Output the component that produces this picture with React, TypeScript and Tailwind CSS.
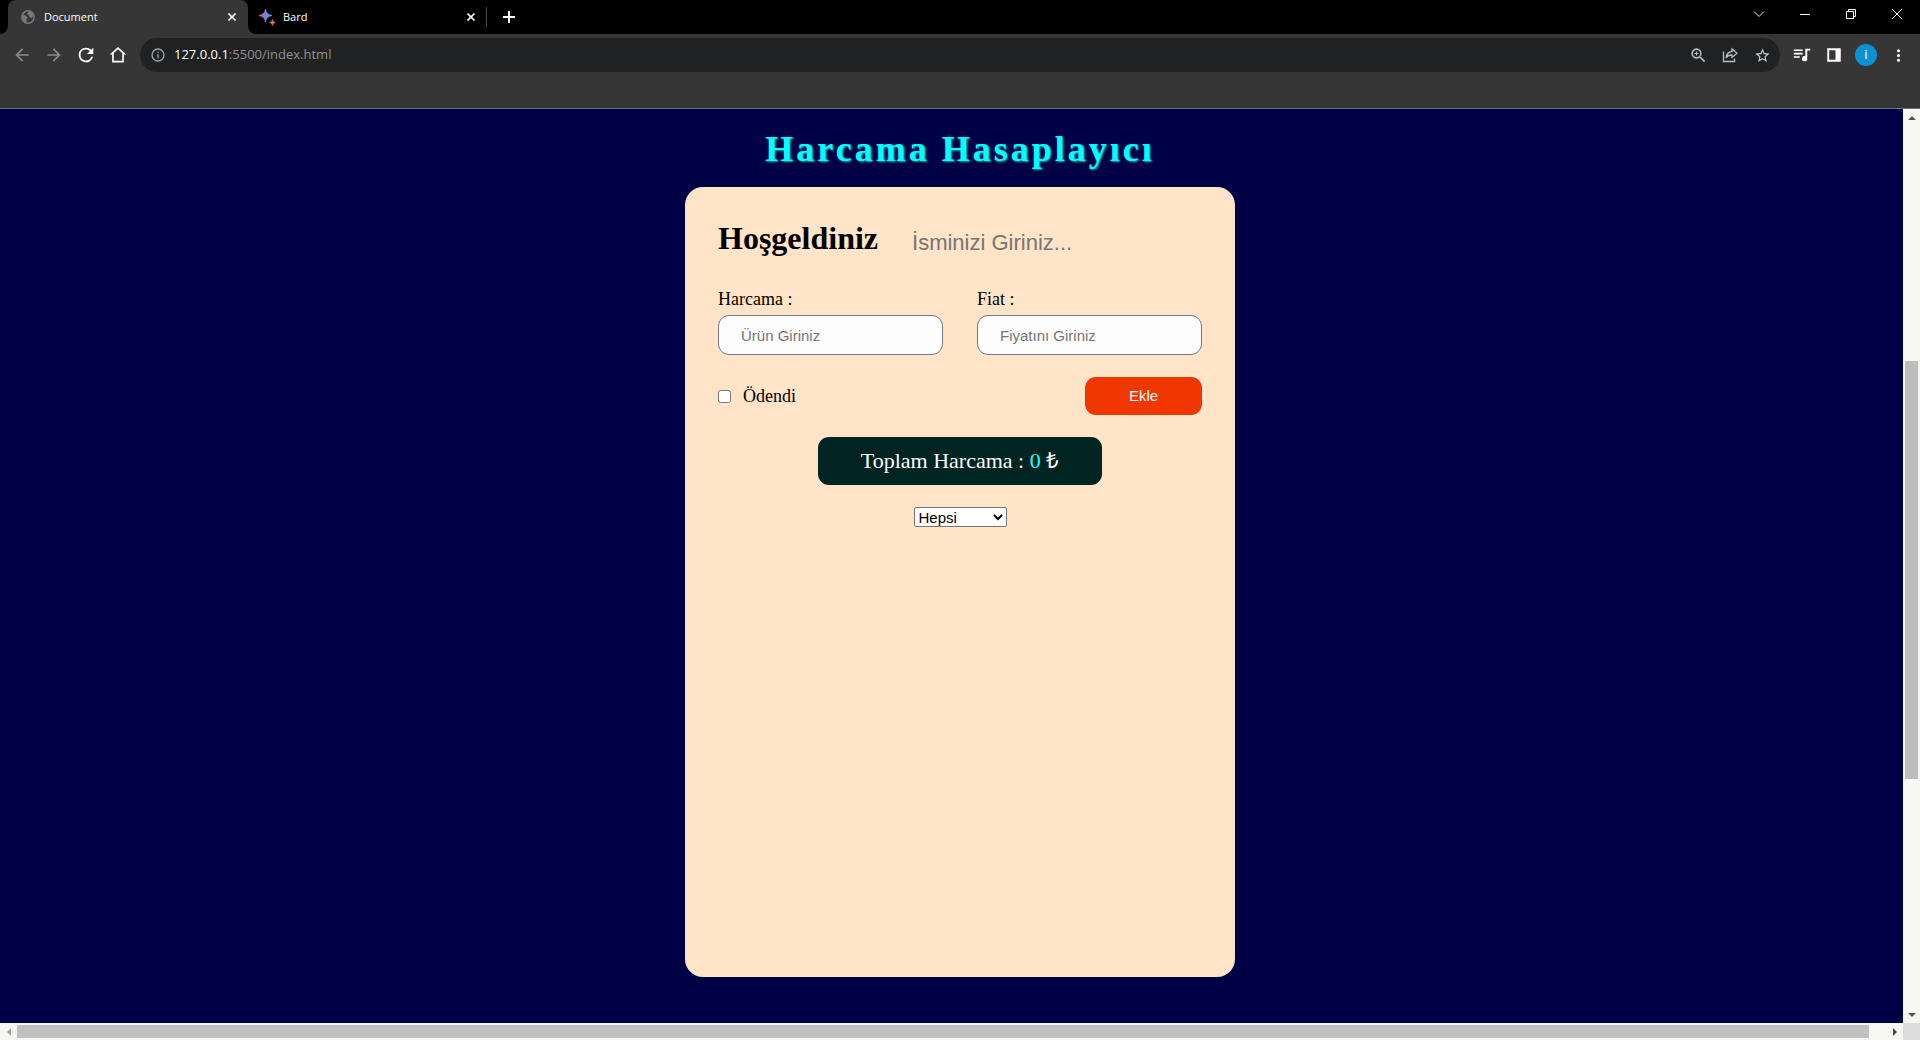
import React from "react";

const uiFont = "font-['Open_Sans','Noto_Sans',sans-serif]";
const serif = "font-['Liberation_Serif','Times_New_Roman',serif]";
const sans = "font-['Liberation_Sans',Arial,sans-serif]";

type IconProps = { path: string; className?: string };

function Icon({ path, className = "size-5" }: IconProps) {
  return (
    <svg viewBox="0 0 24 24" fill="currentColor" className={className} aria-hidden="true">
      <path d={path} />
    </svg>
  );
}

const paths = {
  back: "M20 11H7.83l5.59-5.59L12 4l-8 8 8 8 1.41-1.41L7.83 13H20v-2z",
  forward: "M12 4l-1.41 1.41L16.17 11H4v2h12.17l-5.58 5.59L12 20l8-8z",
  reload:
    "M17.65 6.35A7.96 7.96 0 0 0 12 4a8 8 0 1 0 7.73 10h-2.08A6 6 0 1 1 12 6c1.66 0 3.14.69 4.22 1.78L13 11h7V4l-2.35 2.35z",
  home: "M12 1.2L1 11.2h3.2V22h15.6V11.2H23L12 1.2zM6.4 19.8V9.3L12 4.2l5.600 5.100v10.500z",
  info: "M11 7h2v2h-2zm0 4h2v6h-2zm1-9a10 10 0 1 0 0 20 10 10 0 0 0 0-20zm0 18a8 8 0 1 1 0-16 8 8 0 0 1 0 16z",
  zoom: "M15.5 14h-.79l-.28-.27A6.500 6.500 0 1 0 13.730 14.430l.27.28v.79l5 4.990L20.490 19l-4.990-5zm-6 0a4.500 4.500 0 1 1 0-9 4.500 4.500 0 0 1 0 9zM10.200 7H8.800v1.800H7v1.400h1.800V12h1.400v-1.800H12V8.800h-1.800z",
  star: "M22 9.24l-7.190-.62L12 2 9.190 8.630 2 9.240l5.460 4.730L5.820 21 12 17.270 18.180 21l-1.630-7.030L22 9.240zM12 15.400l-3.760 2.270 1-4.280-3.320-2.880 4.380-.38L12 6.100l1.710 4.040 4.380.38-3.320 2.880 1 4.280L12 15.400z",
  queue:
    "M1 4.500h12v2.200H1zM1 9h12v2.200H1zM1 13.500h8v2.200H1zM15.500 3.500H23v2.400h-4v11a3.500 3.500 0 1 1-2.600-3.300V3.500z",
  panel: "M3 3h18v18H3zm2.600 2.600v12.800H14V5.600z",
  dots: "M12 8a2 2 0 1 0 0-4 2 2 0 0 0 0 4zm0 2a2 2 0 1 0 0 4 2 2 0 0 0 0-4zm0 6a2 2 0 1 0 0 4 2 2 0 0 0 0-4z",
};

function ToolButton({ label, path, tone = "text-white", size = "size-5" }: { label: string; path: string; tone?: string; size?: string }) {
  return (
    <button aria-label={label} className={`flex size-8 items-center justify-center ${tone}`}>
      <Icon path={path} className={size} />
    </button>
  );
}

function CloseIcon() {
  return (
    <svg viewBox="0 0 8 8" className="size-2" stroke="white" strokeWidth="1.6" aria-hidden="true">
      <path d="M.5.5l7 7M7.500.5l-7 7" />
    </svg>
  );
}

function Globe() {
  return (
    <svg viewBox="0 0 14 14" className="size-3.5" aria-hidden="true">
      <circle cx="7" cy="7" r="6.200" fill="none" stroke="#77797d" strokeWidth="1.500" />
      <path d="M2 4.500l3 1.200 1.800 2-1.300 1.200L5.800 12C2.500 11.500.9 8.500 1.200 6zM7 2.200c2-1.300 4.500.2 5.300 2.800l-1 3-2.800-.6L7.800 5 6 4.200z" fill="#77797d" />
    </svg>
  );
}

function Sparkles() {
  return (
    <svg viewBox="0 0 17 17" className="size-[17px]" aria-hidden="true">
      <defs>
        <linearGradient id="spark" x1="0" y1="0.400" x2="1" y2="0.500">
          <stop offset="0" stopColor="#e0714f" />
          <stop offset="0.350" stopColor="#a56fc0" />
          <stop offset="0.650" stopColor="#4f93e8" />
          <stop offset="1" stopColor="#3bb0e0" />
        </linearGradient>
      </defs>
      <path d="M6.500 0Q7.300 5.700 13 6.500 7.300 7.300 6.500 13 5.700 7.300 0 6.500 5.700 5.700 6.500 0z" fill="url(#spark)" stroke="url(#spark)" strokeWidth="0.800" />
      <path d="M13.500 10.500q.4 2.600 3 3-2.600.4-3 3-.4-2.600-3-3 2.600-.4 3-3z" fill="#d9705f" stroke="#d9705f" strokeWidth="0.600" />
    </svg>
  );
}

function TabStrip() {
  return (
    <div className="flex h-[34px] bg-black pl-2 text-[11px] text-white">
      <div className="relative flex w-60 items-center rounded-t-lg bg-[#363636] pr-3 pl-[13px]">
        <svg viewBox="0 0 8 8" className="absolute bottom-0 -left-2 size-2" fill="#363636" aria-hidden="true">
          <path d="M8 0v8H0a8 8 0 0 0 8-8z" />
        </svg>
        <svg viewBox="0 0 8 8" className="absolute -right-2 bottom-0 size-2" fill="#363636" aria-hidden="true">
          <path d="M0 0v8h8a8 8 0 0 1-8-8z" />
        </svg>
        <Globe />
        <span className="ml-[9px] flex-1">Document</span>
        <button aria-label="Close Document" className="flex size-2 items-center">
          <CloseIcon />
        </button>
      </div>
      <div className="flex w-[238px] items-center pr-[11px] pl-[11px]">
        <Sparkles />
        <span className="ml-[7px] flex-1">Bard</span>
        <button aria-label="Close Bard" className="flex size-2 items-center">
          <CloseIcon />
        </button>
      </div>
      <div className="my-[7px] w-px bg-[#4a4b50]" />
      <button aria-label="New tab" className="flex w-11 items-center justify-center">
        <svg viewBox="0 0 12 12" className="size-3" stroke="white" strokeWidth="2" aria-hidden="true">
          <path d="M6 0v12M0 6h12" />
        </svg>
      </button>
      <div className="ml-auto flex h-7 items-center">
        <button aria-label="Search tabs" className="flex w-[46px] justify-center">
          <svg viewBox="0 0 12 12" className="size-3" fill="none" stroke="#ddd" aria-hidden="true">
            <path d="M1 3.500l5 5 5-5" />
          </svg>
        </button>
        <button aria-label="Minimize" className="flex w-[46px] justify-center">
          <svg viewBox="0 0 10 10" className="size-2.5" stroke="white" aria-hidden="true">
            <path d="M0 5.500h10" />
          </svg>
        </button>
        <button aria-label="Restore" className="flex w-[46px] justify-center">
          <svg viewBox="0 0 10 10" className="size-2.5" fill="none" stroke="white" aria-hidden="true">
            <path d="M.5 2.500h7v7h-7zM2.500 2.500v-2h7v7h-2" />
          </svg>
        </button>
        <button aria-label="Close" className="flex w-[46px] justify-center">
          <svg viewBox="0 0 10 10" className="size-2.5" stroke="white" aria-hidden="true">
            <path d="M0 0l10 10M10 0L0 10" />
          </svg>
        </button>
      </div>
    </div>
  );
}

function Toolbar() {
  return (
    <div className="flex h-[42px] items-center px-1.5">
      <ToolButton label="Back" path={paths.back} tone="text-[#8b8c90]" />
      <ToolButton label="Forward" path={paths.forward} tone="text-[#8b8c90]" />
      <ToolButton label="Reload" path={paths.reload} size="size-[22px]" />
      <ToolButton label="Home" path={paths.home} size="size-[18px]" />
      <div className="ml-1.5 flex h-[34px] flex-1 items-center rounded-full bg-[#202122] pr-0.5 pl-2.5">
        <Icon path={paths.info} className="size-4 text-[#a0a2a6]" />
        <a href="#" className="ml-2 flex-1 text-[13px] text-[#8f9195]">
          <span className="text-white">127.0.0.1</span>:5500/index.html
        </a>
        <ToolButton label="Zoom" path={paths.zoom} tone="text-[#b8babd]" size="size-[19px]" />
        <button aria-label="Share" className="flex size-8 items-center justify-center">
          <svg viewBox="0 0 16 16" className="size-4" fill="none" stroke="#b8babd" strokeWidth="1.300" aria-hidden="true">
            <path d="M1.500 4.500v10h11v-3M10 2l5 4.200-5 4.200V8Q6 7.800 4 11 4.700 5 10 4.500z" />
          </svg>
        </button>
        <ToolButton label="Bookmark" path={paths.star} tone="text-[#c8cacd]" size="size-[17px]" />
      </div>
      <div className="ml-1.5 flex items-center">
        <ToolButton label="Media" path={paths.queue} size="size-[18px]" />
        <ToolButton label="Side panel" path={paths.panel} size="size-[18px]" />
        <button aria-label="Profile" className="flex size-8 items-center justify-center">
          <span className="flex size-[22px] items-center justify-center rounded-full bg-[#0b92d4] text-[13px] text-white">i</span>
        </button>
        <ToolButton label="Menu" path={paths.dots} size="size-[19px]" />
      </div>
    </div>
  );
}

function Arrow({ d, color, label }: { d: string; color: string; label: string }) {
  return (
    <button aria-label={label} className="flex size-[17px] shrink-0 items-center justify-center">
      <svg viewBox="0 0 8 8" className="size-2" fill={color} aria-hidden="true">
        <path d={d} />
      </svg>
    </button>
  );
}

function Field({ id, label, placeholder }: { id: string; label: string; placeholder: string }) {
  return (
    <div className="flex flex-1 flex-col gap-1.5">
      <label htmlFor={id} className="text-[18px] leading-5">
        {label}
      </label>
      <input
        id={id}
        placeholder={placeholder}
        className={`h-10 w-full rounded-[11px] border border-[#767690] bg-[#fdfdfd] px-[22px] text-[15px] placeholder:text-[#757575] ${sans}`}
      />
    </div>
  );
}

function ExpenseCard() {
  return (
    <form className="flex min-h-[790px] w-[550px] flex-col rounded-[18px] bg-[#ffe4c8] px-[33px] pt-8">
      <div className="flex items-end gap-[34px]">
        <label htmlFor="name" className="text-[32px] leading-[38px] font-bold">
          Hoşgeldiniz
        </label>
        <input id="name" placeholder="İsminizi Giriniz..." className={`w-52 bg-transparent text-[22px] leading-7 placeholder:text-[#757575] ${sans}`} />
      </div>
      <div className="mt-8 flex gap-[34px]">
        <Field id="expense" label="Harcama :" placeholder="Ürün Giriniz" />
        <Field id="price" label="Fiat :" placeholder="Fiyatını Giriniz" />
      </div>
      <div className="mt-[22px] flex items-center justify-between">
        <label className="flex items-center gap-3 text-[18px] leading-5">
          <input type="checkbox" className="size-[13px]" />
          Ödendi
        </label>
        <button type="button" className={`h-[38px] w-[117px] rounded-[11px] bg-[#f03700] text-[15px] text-white ${sans}`}>
          Ekle
        </button>
      </div>
      <div className="mt-[22px] self-center rounded-[11px] bg-[#002422] px-[43px] text-[22px] leading-[48px] text-white">
        Toplam Harcama : <span className="text-[#22ffff]">0</span> ₺
      </div>
      <select aria-label="Filtre" className={`mt-[22px] h-5 w-[93px] self-center rounded-xs border border-[#767676] bg-white text-[15px] leading-4 ${sans}`}>
        <option>Hepsi</option>
        <option>Ödendi</option>
        <option>Ödenmedi</option>
      </select>
    </form>
  );
}

export default function App() {
  return (
    <div className={`flex h-screen flex-col overflow-hidden bg-[#363636] ${uiFont}`}>
      <TabStrip />
      <Toolbar />
      <div className="h-8" />
      <div className="flex min-h-0 flex-1 border-t border-[#6c6c8c]">
        <main className={`flex min-w-0 flex-1 flex-col items-center overflow-hidden bg-[#000046] pt-4 pl-[17px] text-black ${serif}`}>
          <h1 className="mb-3.5 text-[36px] leading-[48px] font-bold tracking-[3px] text-[#00ffff] [text-shadow:1px_1px_2px_#20b2aa]">
            Harcama Hasaplayıcı
          </h1>
          <ExpenseCard />
        </main>
        <div className="flex w-[17px] flex-col items-center bg-[#f6f6f2]">
          <Arrow label="Scroll up" color="#555" d="M0 6l4-4 4 4z" />
          <div className="flex-[235]" />
          <div className="w-[13px] flex-[418] bg-[#bdbdbd]" />
          <div className="flex-[227]" />
          <Arrow label="Scroll down" color="#555" d="M0 2l4 4 4-4z" />
        </div>
      </div>
      <div className="flex h-[17px] items-center bg-[#f6f6f2]">
        <Arrow label="Scroll left" color="#a3a3a3" d="M6 0L2 4l4 4z" />
        <div className="h-[13px] flex-[1852] bg-[#c1c1c1]" />
        <div className="flex-[17]" />
        <Arrow label="Scroll right" color="#444" d="M2 0l4 4-4 4z" />
        <div className="size-[17px] bg-[#dcdcdc]" />
      </div>
    </div>
  );
}
